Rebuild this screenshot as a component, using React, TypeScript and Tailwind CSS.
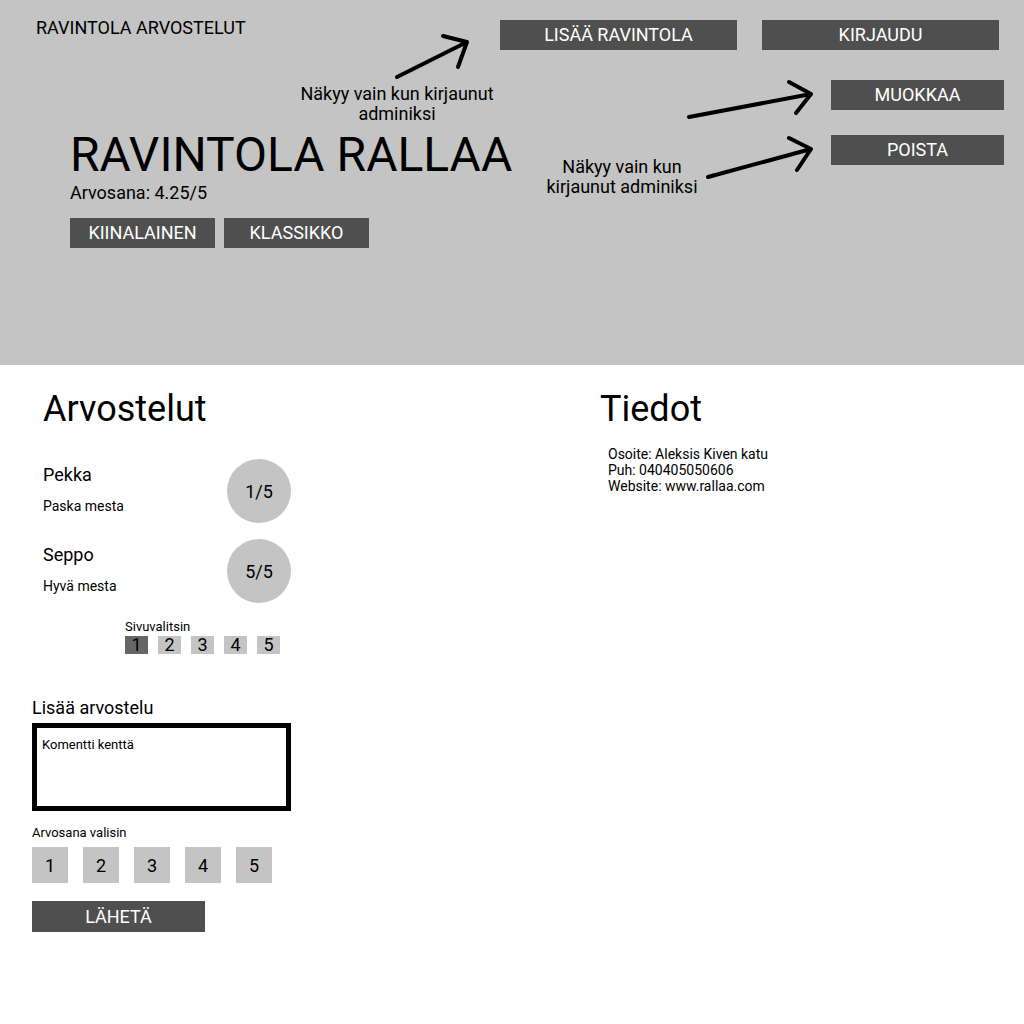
const reviews = [
  { name: "Pekka", text: "Paska mesta", score: "1/5" },
  { name: "Seppo", text: "Hyvä mesta", score: "5/5" },
];

const DarkButton = ({ label, className }: { label: string; className: string }) => (
  <button className={`flex items-center justify-center bg-[#4f4f4f] text-[18px] leading-5 text-white ${className}`}>
    {label}
  </button>
);

const App = () => {
  return (
    <div className="min-h-[1024px] bg-white font-['Roboto',sans-serif] text-black">
      <header className="relative h-[365px] bg-[#c4c4c4]">
        <div className="flex items-start justify-between pl-9 pr-[25px] pt-[18px]">
          <h1 className="text-[18px] leading-5">RAVINTOLA ARVOSTELUT</h1>
          <nav className="mt-[2px] flex gap-[25px]">
            <DarkButton label="LISÄÄ RAVINTOLA" className="h-[30px] w-[237px]" />
            <DarkButton label="KIRJAUDU" className="h-[30px] w-[237px]" />
          </nav>
        </div>
        <div className="mt-[30px] flex items-start justify-between pl-[70px] pr-5">
          <div className="pt-[51px]">
            <h2 className="text-[48px] leading-[48px]">RAVINTOLA RALLAA</h2>
            <p className="mt-[3px] text-[18px] leading-[22px]">Arvosana: 4.25/5</p>
            <div className="mt-[14px] flex gap-[9px]">
              <DarkButton label="KIINALAINEN" className="h-[30px] w-[145px]" />
              <DarkButton label="KLASSIKKO" className="h-[30px] w-[145px]" />
            </div>
          </div>
          <div className="flex flex-col gap-[25px]">
            <DarkButton label="MUOKKAA" className="h-[30px] w-[173px]" />
            <DarkButton label="POISTA" className="h-[30px] w-[173px]" />
          </div>
        </div>

        {/* admin notes */}
        <p className="absolute left-[287px] top-[84px] w-[220px] text-center text-[18px] leading-5">
          Näkyy vain kun kirjaunut
          <br />
          adminiksi
        </p>
        <p className="absolute left-[527px] top-[157px] w-[190px] text-center text-[18px] leading-5">
          Näkyy vain kun
          <br />
          kirjaunut adminiksi
        </p>
        <svg className="pointer-events-none absolute left-0 top-0" width="1024" height="365" viewBox="0 0 1024 365">
          <g fill="none" stroke="black" strokeWidth="4" strokeLinecap="round" strokeLinejoin="round">
            <path d="M397 77 L467 42 M443 36 L467 42 L458 67" />
            <path d="M689 117 L811 94 M789 82 L811 94 L796 113" />
            <path d="M708 177 L811 149 M789 138 L811 149 L797 170" />
          </g>
        </svg>
      </header>

      <main className="flex">
        <section className="w-[600px]">
          <div className="pl-[43px]">
            <h2 className="mt-[22px] text-[36px] leading-[44px]">Arvostelut</h2>
            <ul className="mt-[28px] flex flex-col gap-4">
              {reviews.map((r) => (
                <li key={r.name} className="flex items-center">
                  <div className="-mt-[3px] flex w-[184px] flex-col gap-[11px]">
                    <span className="text-[18px] leading-[22px]">{r.name}</span>
                    <span className="text-[14px] leading-[18px]">{r.text}</span>
                  </div>
                  <div className="flex h-16 w-16 items-center justify-center rounded-full bg-[#c4c4c4] text-[18px]">
                    {r.score}
                  </div>
                </li>
              ))}
            </ul>
            <div className="ml-[82px] mt-[17px]">
              <p className="text-[13px] leading-[14px]">Sivuvalitsin</p>
              <div className="mt-[2px] flex gap-[10px]">
                {[1, 2, 3, 4, 5].map((n) => (
                  <span
                    key={n}
                    className={`flex h-[18px] w-[23px] items-end justify-center text-[18px] leading-[18px] ${
                      n === 1 ? "bg-[#666666]" : "bg-[#c4c4c4]"
                    }`}
                  >
                    {n}
                  </span>
                ))}
              </div>
            </div>
          </div>

          <form className="mt-[44px] pl-8">
            <h3 className="text-[18px] leading-5">Lisää arvostelu</h3>
            <div className="mt-[5px] h-[88px] w-[259px] border-[5px] border-black pl-[5px] pt-[9px] text-[13px] leading-4">
              Komentti kenttä
            </div>
            <p className="mt-[14px] text-[13px] leading-4">Arvosana valisin</p>
            <div className="mt-[6px] flex gap-[15px]">
              {[1, 2, 3, 4, 5].map((n) => (
                <span key={n} className="flex h-9 w-9 items-center justify-center bg-[#c4c4c4] text-[18px]">
                  {n}
                </span>
              ))}
            </div>
            <DarkButton label="LÄHETÄ" className="mt-[18px] h-[31px] w-[173px]" />
          </form>
        </section>

        <section>
          <h2 className="mt-[22px] text-[36px] leading-[44px]">Tiedot</h2>
          <div className="ml-2 mt-[15px] text-[14px] leading-4">
            <p>Osoite: Aleksis Kiven katu</p>
            <p>Puh: 040405050606</p>
            <p>Website: www.rallaa.com</p>
          </div>
        </section>
      </main>
    </div>
  );
};

export default App;
